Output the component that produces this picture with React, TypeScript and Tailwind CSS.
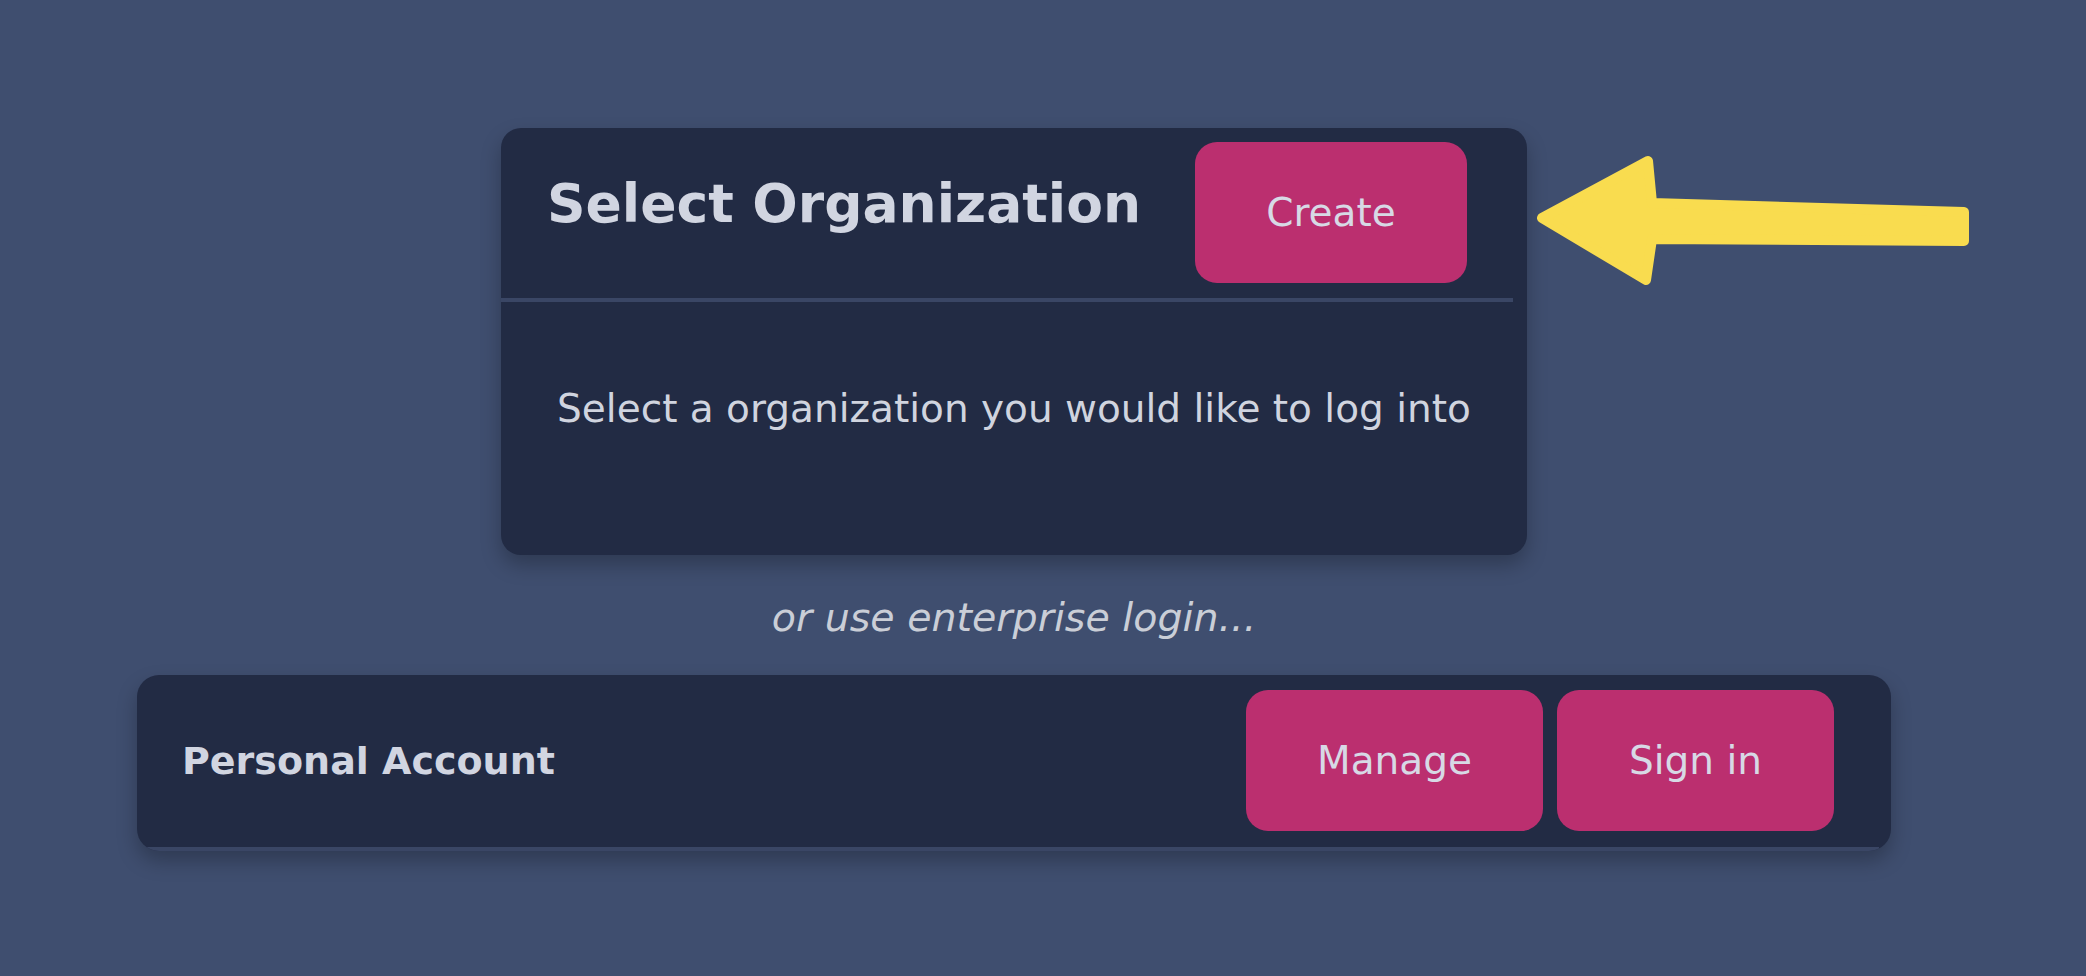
const buttonClass =
  "flex h-[141px] items-center justify-center rounded-[22px] bg-[#bb2f6f] text-[39px] leading-none text-[#d7d9e5]";

function Arrow() {
  return (
    <svg
      className="pointer-events-none absolute left-[1530px] top-[145px]"
      width="450"
      height="150"
      viewBox="0 0 450 150"
      aria-hidden="true"
    >
      <polygon
        points="12,73 118,16 122,58 434,67 434,96 122,94 116,135"
        fill="#f9dc4f"
        stroke="#f9dc4f"
        strokeWidth="10"
        strokeLinejoin="round"
      />
    </svg>
  );
}

export default function App() {
  return (
    <div className="relative min-h-screen w-full bg-[#3f4e6f] font-['DejaVu_Sans',sans-serif] text-[#d1d5e1]">
      <div className="flex flex-col items-center pr-[58px] pt-[128px]">
        {/* organization picker */}
        <div className="w-[1026px] overflow-hidden rounded-[20px] bg-[#222b44] shadow-[0_10px_20px_rgba(0,0,0,0.25)]">
          <div className="flex h-[170px] items-start justify-between pl-[46px] pr-[60px] pt-[14px]">
            <h1 className="mt-[35px] text-[53.5px] font-bold leading-none">Select Organization</h1>
            <button type="button" className={`${buttonClass} w-[272px]`}>
              Create
            </button>
          </div>
          <div className="mr-[14px] h-[4px] bg-[#3a4665]" />
          <p className="pb-[127px] pt-[87px] text-center text-[39px] leading-none text-[#d0d4df]">
            Select a organization you would like to log into
          </p>
        </div>

        <p className="mb-[37px] mt-[43px] text-[39.5px] italic leading-none text-[#caced7]">
          or use enterprise login...
        </p>

        {/* personal account */}
        <div className="w-[1754px] overflow-hidden rounded-[22px] bg-[#222b44] shadow-[0_10px_20px_rgba(0,0,0,0.25)]">
          <div className="flex h-[172px] items-center justify-between pl-[45px] pr-[57px]">
            <span className="text-[38px] font-bold leading-none">Personal Account</span>
            <div className="flex gap-[14px]">
              <button type="button" className={`${buttonClass} w-[297px]`}>
                Manage
              </button>
              <button type="button" className={`${buttonClass} w-[277px]`}>
                Sign in
              </button>
            </div>
          </div>
          <div className="mr-[12px] h-[4px] bg-[#3a4665]" />
        </div>
      </div>
      <Arrow />
    </div>
  );
}
